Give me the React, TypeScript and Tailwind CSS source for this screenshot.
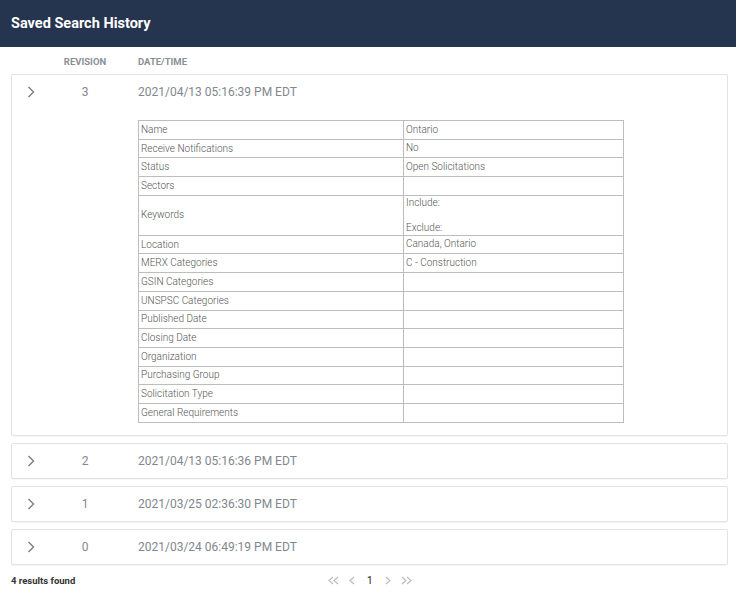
const rows: { label: string; value: string[]; tall?: boolean }[] = [
  { label: 'Name', value: ['Ontario'] },
  { label: 'Receive Notifications', value: ['No'] },
  { label: 'Status', value: ['Open Solicitations'] },
  { label: 'Sectors', value: [] },
  { label: 'Keywords', value: ['Include:', '', 'Exclude:'], tall: true },
  { label: 'Location', value: ['Canada, Ontario'] },
  { label: 'MERX Categories', value: ['C - Construction'] },
  { label: 'GSIN Categories', value: [] },
  { label: 'UNSPSC Categories', value: [] },
  { label: 'Published Date', value: [] },
  { label: 'Closing Date', value: [] },
  { label: 'Organization', value: [] },
  { label: 'Purchasing Group', value: [] },
  { label: 'Solicitation Type', value: [] },
  { label: 'General Requirements', value: [] },
];

const revisions = [
  { rev: 3, date: '2021/04/13 05:16:39 PM EDT', open: true },
  { rev: 2, date: '2021/04/13 05:16:36 PM EDT' },
  { rev: 1, date: '2021/03/25 02:36:30 PM EDT' },
  { rev: 0, date: '2021/03/24 06:49:19 PM EDT' },
];

const Chevron = () => (
  <svg width="8" height="12" viewBox="0 0 8 12" fill="none">
    <polyline points="1.5,1 6.5,6 1.5,11" stroke="#7a7f86" strokeWidth="1.4" />
  </svg>
);

// small pager arrows
const PageArrow = ({ dir, double }: { dir: 'l' | 'r'; double?: boolean }) => {
  const pts = (x: number) =>
    dir === 'l' ? `${x + 4},1 ${x},4.5 ${x + 4},8` : `${x},1 ${x + 4},4.5 ${x},8`;
  return (
    <svg width={double ? 11 : 6} height="9" viewBox={double ? '0 0 11 9' : '0 0 6 9'} fill="none">
      <polyline points={pts(1)} stroke="#b9bdc3" strokeWidth="1.2" />
      {double && <polyline points={pts(6)} stroke="#b9bdc3" strokeWidth="1.2" />}
    </svg>
  );
};

const RevisionCard = ({ rev, date, open }: { rev: number; date: string; open?: boolean }) => (
  <div className="border border-[#e3e3e3] rounded-[2px] bg-white shadow-[0_1px_1px_rgba(0,0,0,0.04)]">
    <div className="flex items-center h-[34px]">
      <div className="w-[38px] flex pl-[15px]">
        <Chevron />
      </div>
      <div className="w-[70px] text-center text-[12px] text-[#82878e]">{rev}</div>
      <div className="ml-[18px] text-[12px] text-[#82878e]">{date}</div>
    </div>
    {open && (
      <div className="pl-[126px] pt-[11px] pb-[12px]">
        <table className="border-collapse text-[10px] font-light text-[#555] w-[486px]">
          <tbody>
            {rows.map((r) => (
              <tr key={r.label}>
                <td className={`border border-[#bdbdbd] px-[2px] w-[265px] ${r.tall ? 'h-[40px]' : 'h-[18.7px]'} leading-[12px]`}>
                  {r.label}
                </td>
                <td className="border border-[#bdbdbd] px-[2px] leading-[12.5px]">
                  {r.value.map((v, i) => (
                    <div key={i} className="min-h-[12.5px]">{v}</div>
                  ))}
                </td>
              </tr>
            ))}
          </tbody>
        </table>
      </div>
    )}
  </div>
);

export default function App() {
  return (
    <div className="w-[736px] h-[594px] bg-white font-['Roboto',sans-serif]">
      <div className="h-[47px] bg-[#25344f] flex items-center px-[11px]">
        <h1 className="text-[14.5px] font-bold text-white">Saved Search History</h1>
      </div>

      <div className="pl-[11px] pr-[8px]">
        <div className="flex items-center h-[27px] pt-[4px] text-[9.5px] font-bold text-[#8a8f96] pl-[1px]">
          <div className="w-[38px]" />
          <div className="w-[70px] text-center">REVISION</div>
          <div className="ml-[18px]">DATE/TIME</div>
        </div>

        <div className="flex flex-col gap-[7px]">
          {revisions.map((r) => (
            <RevisionCard key={r.rev} {...r} />
          ))}
        </div>

        <div className="flex items-center h-[32px] relative">
          <span className="text-[9.5px] font-bold text-[#333]">4 results found</span>
          <div className="absolute left-[317px] flex items-center gap-[10px]">
            <PageArrow dir="l" double />
            <PageArrow dir="l" />
            <span className="text-[#222] text-[10px] px-[2px]">1</span>
            <PageArrow dir="r" />
            <PageArrow dir="r" double />
          </div>
        </div>
      </div>
    </div>
  );
}
